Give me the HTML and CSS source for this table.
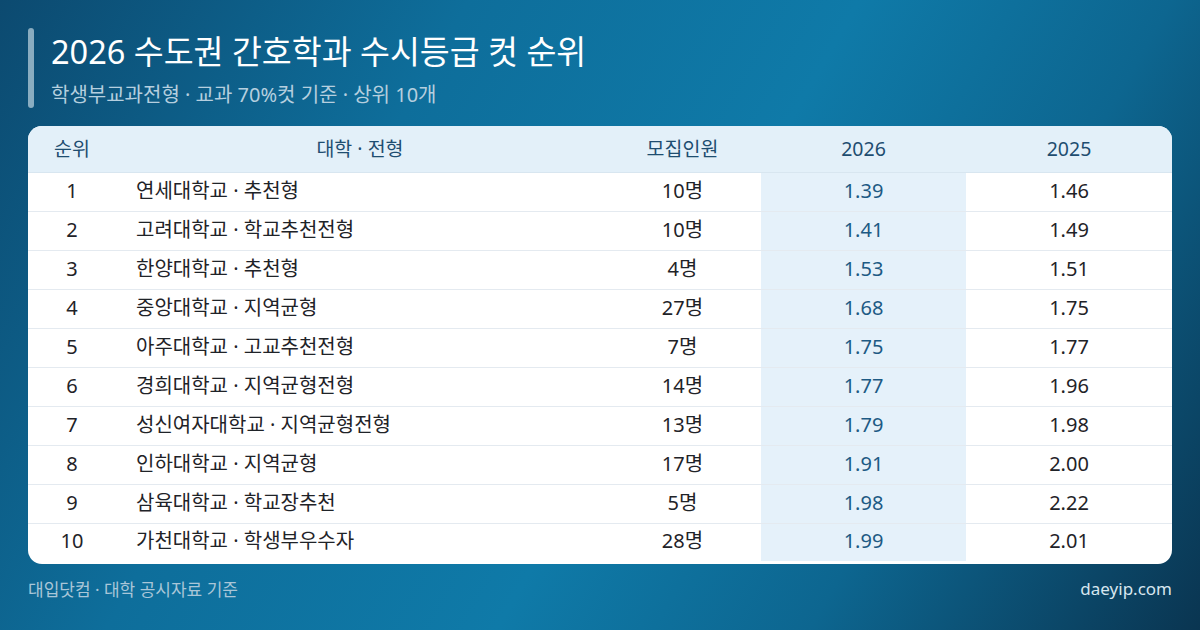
FILE: index.html
```html
<!DOCTYPE html>
<html lang="ko">
<head>
<meta charset="utf-8">
<link rel="stylesheet" href="styles.css">
</head>
<body>
<div class="page">
  <header class="head">
    <div class="bar"></div>
    <div class="titles">
      <h1 class="title">2026 수도권 간호학과 수시등급 컷 순위</h1>
      <p class="subtitle">학생부교과전형 · 교과 70%컷 기준 · 상위 10개</p>
    </div>
  </header>
  <div class="card">
    <table class="rank">
      <colgroup>
        <col class="c-rank"><col class="c-name"><col class="c-num"><col class="c-y26"><col class="c-y25">
      </colgroup>
      <thead>
        <tr><th>순위</th><th>대학 · 전형</th><th>모집인원</th><th>2026</th><th>2025</th></tr>
      </thead>
      <tbody>
        <tr><td>1</td><td class="name">연세대학교 · 추천형</td><td>10명</td><td class="hl">1.39</td><td>1.46</td></tr>
        <tr><td>2</td><td class="name">고려대학교 · 학교추천전형</td><td>10명</td><td class="hl">1.41</td><td>1.49</td></tr>
        <tr><td>3</td><td class="name">한양대학교 · 추천형</td><td>4명</td><td class="hl">1.53</td><td>1.51</td></tr>
        <tr><td>4</td><td class="name">중앙대학교 · 지역균형</td><td>27명</td><td class="hl">1.68</td><td>1.75</td></tr>
        <tr><td>5</td><td class="name">아주대학교 · 고교추천전형</td><td>7명</td><td class="hl">1.75</td><td>1.77</td></tr>
        <tr><td>6</td><td class="name">경희대학교 · 지역균형전형</td><td>14명</td><td class="hl">1.77</td><td>1.96</td></tr>
        <tr><td>7</td><td class="name">성신여자대학교 · 지역균형전형</td><td>13명</td><td class="hl">1.79</td><td>1.98</td></tr>
        <tr><td>8</td><td class="name">인하대학교 · 지역균형</td><td>17명</td><td class="hl">1.91</td><td>2.00</td></tr>
        <tr><td>9</td><td class="name">삼육대학교 · 학교장추천</td><td>5명</td><td class="hl">1.98</td><td>2.22</td></tr>
        <tr><td>10</td><td class="name">가천대학교 · 학생부우수자</td><td>28명</td><td class="hl">1.99</td><td>2.01</td></tr>
      </tbody>
    </table>
  </div>
  <footer class="foot">
    <span class="source">대입닷컴 · 대학 공시자료 기준</span>
    <span class="site">daeyip.com</span>
  </footer>
</div>
</body>
</html>
```

FILE: styles.css
```css
* { box-sizing: border-box; }
html, body { margin: 0; padding: 0; }
body {
  width: 1200px;
  height: 630px;
  overflow: hidden;
  font-family: "Noto Sans", "Noto Sans CJK KR", sans-serif;
  background: linear-gradient(120deg, #0c4a70 0%, #0e6e9b 30%, #0f7aa8 55%, #0d6690 75%, #0a3551 100%);
}
.page {
  width: 1200px;
  height: 630px;
  padding: 28px 28px 0;
}
.head {
  display: flex;
  gap: 17px;
  padding-bottom: 3px;
}
.bar {
  width: 6px;
  border-radius: 3px;
  background: rgba(205, 222, 232, 0.65);
  flex: none;
}
.titles { padding-top: 2px; }
.title {
  margin: 0;
  font-size: 32.5px;
  line-height: 44px;
  font-weight: 400;
  color: #ffffff;
}
.subtitle {
  margin: 8px 0 0;
  font-size: 20px;
  line-height: 26px;
  color: #b5cfdf;
}
.card {
  margin-top: 15px;
  background: #ffffff;
  border-radius: 14px;
  overflow: hidden;
  padding-bottom: 3px;
}
.rank {
  width: 100%;
  border-collapse: collapse;
  table-layout: fixed;
  font-size: 20px;
  line-height: 26px;
}
.c-rank { width: 88px; }
.c-name { width: 488px; }
.c-num { width: 157px; }
.c-y26 { width: 205px; }
.c-y25 { width: 206px; }
.rank th {
  height: 46px;
  background: #e3f0f9;
  color: #1e4d70;
  font-weight: 400;
  font-size: 19.5px;
  text-align: center;
  padding: 0;
  border-bottom: 1px solid #d8e6f0;
}
.rank td {
  height: 39px;
  padding: 0 0 2px;
  text-align: center;
  color: #1f2328;
  border-bottom: 1px solid #e4eaf0;
}
.rank tbody tr:last-child td { border-bottom: none; height: 38px; }
.rank td.name {
  text-align: left;
  padding-left: 20px;
}
.rank td.hl {
  background: #e5f1fa;
  color: #1d5a84;
}
.foot {
  display: flex;
  justify-content: space-between;
  align-items: center;
  margin-top: 13px;
  height: 22px;
}
.source {
  font-size: 17px;
  color: #a9c6d8;
}
.site {
  font-size: 17px;
  color: #d7e6ef;
}
```
